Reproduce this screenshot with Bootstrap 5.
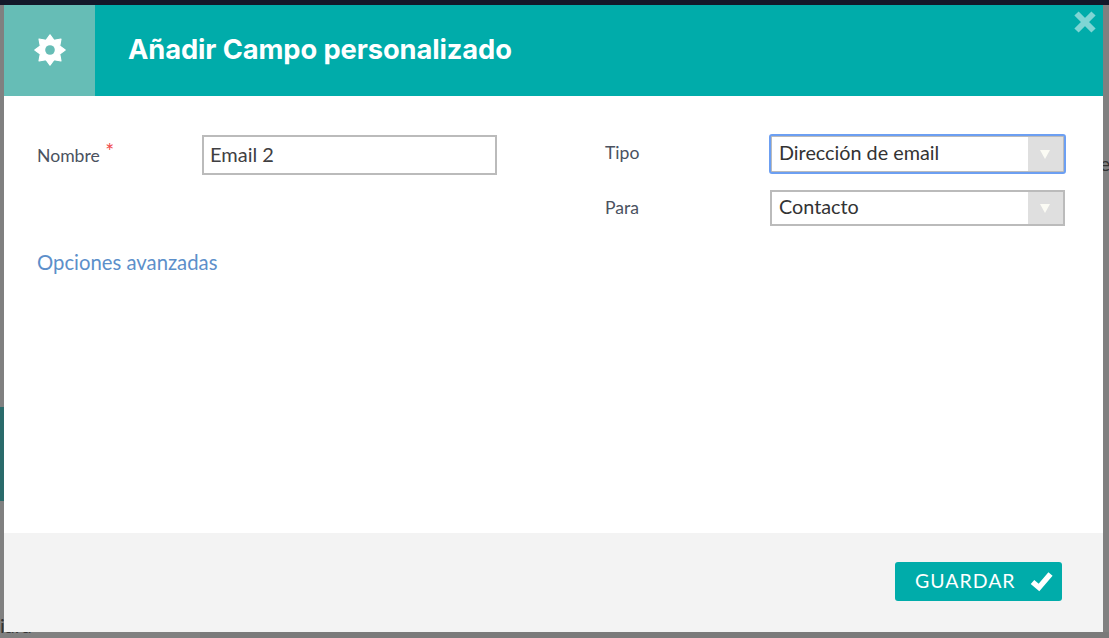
<!doctype html>
<html lang="es">
<head>
<meta charset="utf-8">
<title>Añadir Campo personalizado</title>
<link href="https://cdn.jsdelivr.net/npm/bootstrap@5.3.0/dist/css/bootstrap.min.css" rel="stylesheet">
<style>
html,body{height:100%;overflow:hidden}
body{background:#808080;font-family:"Lato","Liberation Sans",sans-serif;color:#3f4754;position:relative}
.top-strip{height:5px;background:#13192a}
.teal-scrap{position:absolute;left:0;top:407px;width:4px;height:94px;background:#2a6b6b}
.side-scrap{position:absolute;left:1093px;top:152px;font-size:20px;color:#333;line-height:22px}
.bottom-scrap{position:absolute;left:0;top:614px;font-size:20px;color:#333;line-height:22px}
.bottom-shade{position:absolute;left:200px;right:0;top:632px;height:6px;background:#7a7a7a}
.dialog-box{position:absolute;left:4px;top:5px;width:1099px;height:627px;background:#fff;display:flex;flex-direction:column}
.dialog-head{height:91px;background:#00acaa;color:#fff;flex:none}
.head-icon{width:91px;background:#66bdb6}
.head-icon svg{margin-bottom:2px}
.head-title{margin:0 0 2px 33px;font-size:27.3px;font-weight:700;line-height:1;font-family:"Inter",sans-serif;letter-spacing:-.1px}
.close-x{position:absolute;right:7px;top:6px;width:22px;height:22px;padding:0;border:0;background:none;line-height:0}
.dialog-body{flex:1;padding:39px 38px 0 33px}
.col-l{width:460px}
.col-r{width:460px;margin-left:108px}
.lbl{font-size:17.6px;color:#4a5260;margin:0}
.req{color:#f0494b;font-size:21px;line-height:1;position:relative;top:-3px;margin-left:1px}
.lbl-l{width:165px;padding-top:8px}
.lbl-r{width:165px}
.lbl-up{padding-bottom:2px}
.txt-in.form-control{width:295px;height:40px;border:2px solid #bbb;border-radius:0;font-size:20px;color:#3f4042;padding:0 6px 2px;box-shadow:none;font-family:"Lato",sans-serif}
.sel-wrap{width:295px;border:2px solid #bbb;flex-wrap:nowrap}
.sel-wrap.is-foc{outline:2px solid #6c9ff2;outline-offset:-1px;border-radius:2px;height:38px}
.sel-plain{height:36px}
.sel-wrap .form-select{border:0;border-radius:0;background-image:none;font-size:19.8px;color:#333;padding:0 7px 2px;height:100%;box-shadow:none;font-family:"Lato",sans-serif}
.sel-wrap .input-group-text{width:36px;background:#dfdfdf;border:0;border-radius:0;padding:0;justify-content:center;height:100%}
.tri{width:0;height:0;border-left:5px solid transparent;border-right:5px solid transparent;border-top:9px solid #fbfbf4}
.row-gap{margin-bottom:17px}
.adv-link{font-size:20.3px;color:#5c8fca;text-decoration:none;display:inline-block;line-height:24px}
.adv-wrap{margin-top:75px}
.dialog-foot{height:99px;background:#f3f3f3;flex:none;padding:29px 41px 0 0}
.save-btn.btn{width:167px;height:39px;background:#00acaa;border:0;border-radius:3px;color:#fff;font-size:19.5px;letter-spacing:1px;padding:0 0 2px 20px;font-family:"Lato",sans-serif}
.save-btn.btn svg{margin-top:2px}
.save-btn.btn:hover{background:#00acaa;color:#fff}
</style>
</head>
<body>
<div class="top-strip"></div>
<div class="teal-scrap"></div>
<div class="side-scrap">re</div>
<div class="bottom-scrap">iara</div>
<div class="bottom-shade"></div>

<div class="dialog-box" role="dialog">
  <div class="dialog-head d-flex align-items-stretch position-relative">
    <div class="head-icon d-flex align-items-center justify-content-center">
      <svg width="32" height="32" viewBox="0 0 32 32" aria-hidden="true"><path fill="#fff" stroke="#fff" stroke-width="1.2" stroke-linejoin="round" d="M16 .8 20 6.3 27 5 25.7 12 31.2 16 25.7 20 27 27 20 25.7 16 31.2 12 25.7 5 27 6.3 20 .8 16 6.3 12 5 5 12 6.3Z"/><circle cx="16" cy="16" r="4.8" fill="#66bdb6"/></svg>
    </div>
    <div class="d-flex align-items-center"><h1 class="head-title">Añadir Campo personalizado</h1></div>
    <button class="close-x" type="button" aria-label="Cerrar">
      <svg width="22" height="22" viewBox="0 0 22 22" aria-hidden="true"><path d="M2.5 2.5 19.5 19.5M19.5 2.5 2.5 19.5" stroke="#80d5d4" stroke-width="6" fill="none"/></svg>
    </button>
  </div>

  <div class="dialog-body d-flex">
    <div class="col-l">
      <div class="d-flex">
        <label class="lbl lbl-l">Nombre <span class="req">*</span></label>
        <input class="form-control txt-in" type="text" value="Email 2">
      </div>
      <div class="adv-wrap"><a class="adv-link" href="#">Opciones avanzadas</a></div>
    </div>
    <div class="col-r">
      <div class="d-flex align-items-center row-gap">
        <label class="lbl lbl-r lbl-up">Tipo</label>
        <div class="input-group sel-wrap is-foc">
          <select class="form-select"><option>Dirección de email</option></select>
          <span class="input-group-text"><span class="tri"></span></span>
        </div>
      </div>
      <div class="d-flex align-items-center">
        <label class="lbl lbl-r">Para</label>
        <div class="input-group sel-wrap sel-plain">
          <select class="form-select"><option>Contacto</option></select>
          <span class="input-group-text"><span class="tri"></span></span>
        </div>
      </div>
    </div>
  </div>

  <div class="dialog-foot d-flex justify-content-end align-items-start">
    <button class="btn save-btn d-flex align-items-center" type="button">GUARDAR
      <svg class="ms-auto me-2" width="24" height="22" viewBox="0 0 24 22" aria-hidden="true"><path d="M2.5 11 9 16.5 20.5 3" stroke="#fff" stroke-width="5.5" fill="none"/></svg>
    </button>
  </div>
</div>
<script src="https://cdn.jsdelivr.net/npm/bootstrap@5.3.0/dist/js/bootstrap.bundle.min.js"></script>
</body>
</html>
